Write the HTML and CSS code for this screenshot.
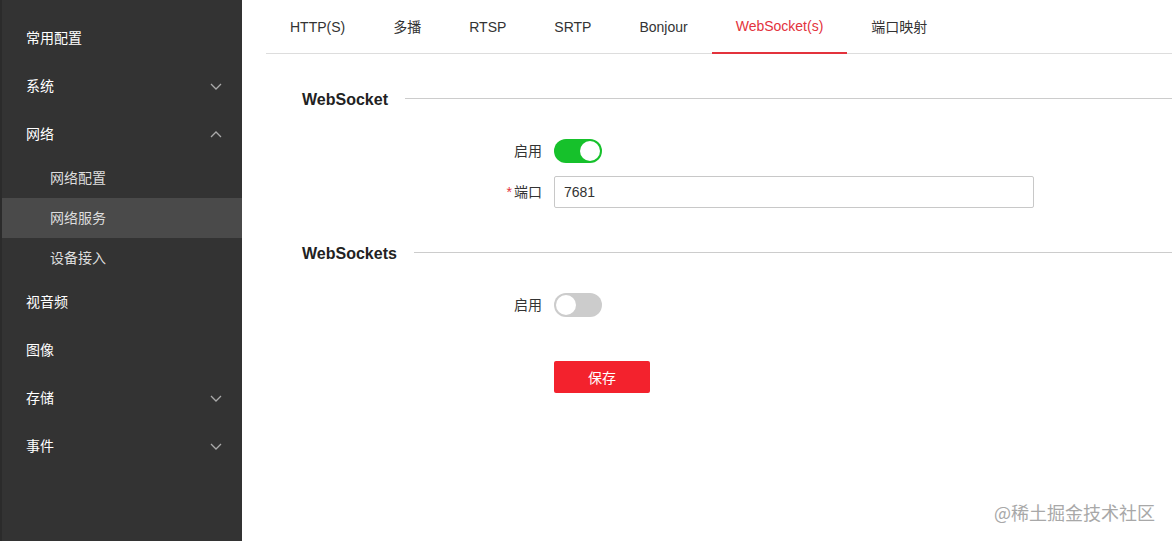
FILE: index.html
```html
<!DOCTYPE html>
<html lang="zh-CN">
<head>
    <meta charset="UTF-8">
    <meta name="viewport" content="width=device-width, initial-scale=1.0">
    <title>网络服务</title>
    <link rel="stylesheet" href="styles.css">
</head>
<body>
    <div class="layout">
        <aside class="sidebar">
            <div class="menu-item">常用配置</div>
            <div class="menu-item">系统
                <svg class="chevron" width="12" height="7" viewBox="0 0 12 7"><polyline points="1,1 6,6 11,1" /></svg>
            </div>
            <div class="menu-item">网络
                <svg class="chevron" width="12" height="7" viewBox="0 0 12 7"><polyline points="1,6 6,1 11,6" /></svg>
            </div>
            <div class="sub-item">网络配置</div>
            <div class="sub-item active">网络服务</div>
            <div class="sub-item">设备接入</div>
            <div class="menu-item">视音频</div>
            <div class="menu-item">图像</div>
            <div class="menu-item">存储
                <svg class="chevron" width="12" height="7" viewBox="0 0 12 7"><polyline points="1,1 6,6 11,1" /></svg>
            </div>
            <div class="menu-item">事件
                <svg class="chevron" width="12" height="7" viewBox="0 0 12 7"><polyline points="1,1 6,6 11,1" /></svg>
            </div>
        </aside>

        <main class="main">
            <nav class="tabs">
                <div class="tab">HTTP(S)</div>
                <div class="tab">多播</div>
                <div class="tab">RTSP</div>
                <div class="tab">SRTP</div>
                <div class="tab">Bonjour</div>
                <div class="tab active">WebSocket(s)</div>
                <div class="tab">端口映射</div>
            </nav>

            <div class="content">
                <div class="section-title"><span>WebSocket</span></div>
                <div class="form-row">
                    <label class="form-label">启用</label>
                    <span class="switch on"><span class="knob"></span></span>
                </div>
                <div class="form-row tight">
                    <label class="form-label"><span class="required">*</span>端口</label>
                    <input class="input" type="text" value="7681">
                </div>

                <div class="section-title second"><span>WebSockets</span></div>
                <div class="form-row">
                    <label class="form-label">启用</label>
                    <span class="switch"><span class="knob"></span></span>
                </div>

                <div class="form-row actions">
                    <span class="form-label"></span>
                    <button class="btn-save">保存</button>
                </div>
            </div>
        </main>
    </div>
    <div class="watermark">@稀土掘金技术社区</div>
</body>
</html>
```

FILE: styles.css
```css
html, body {
    margin: 0;
    height: 100%;
}
body {
    font-family: "Liberation Sans", "Noto Sans CJK SC", sans-serif;
    font-size: 14px;
    line-height: 20px;
    color: #333;
    background-color: #fff;
}
.layout {
    display: flex;
    height: 100%;
}
.sidebar {
    width: 240px;
    flex-shrink: 0;
    background-color: #333;
    border-left: 2px solid #2b2b2b;
    padding-top: 14px;
    box-sizing: content-box;
}
.menu-item {
    height: 48px;
    display: flex;
    align-items: center;
    justify-content: space-between;
    padding: 0 20px 0 24px;
    color: #fff;
}
.sub-item {
    height: 40px;
    display: flex;
    align-items: center;
    padding-left: 48px;
    color: #ddd;
}
.sub-item.active {
    background-color: #4a4a4a;
}
.chevron polyline {
    fill: none;
    stroke: #aaa;
    stroke-width: 1.3;
}
.main {
    flex: 1;
    padding-left: 24px;
}
.tabs {
    display: flex;
    height: 53px;
    border-bottom: 1px solid #ddd;
}
.tab {
    padding: 0 24px;
    display: flex;
    align-items: center;
    padding-bottom: 1px;
    box-sizing: border-box;
    height: 54px;
    margin-bottom: -1px;
    color: #333;
}
.tab.active {
    color: #e3323c;
    border-bottom: 2px solid #e3323c;
    padding-bottom: 0;
}
.content {
    padding-left: 36px;
}
.section-title {
    display: flex;
    align-items: center;
    height: 24px;
    margin-top: 33px;
    font-size: 16px;
    font-weight: bold;
    color: #222;
}
.section-title span {
    padding-top: 1px;
}
.section-title::after {
    content: "";
    flex: 1;
    height: 1px;
    background-color: #ccc;
    margin-left: 17px;
    margin-top: -2px;
}
.form-row {
    display: flex;
    align-items: center;
    height: 32px;
    margin-top: 24px;
}
.form-row.tight {
    margin-top: 9px;
}
.form-row.actions {
    margin-top: 40px;
}
.form-label {
    width: 240px;
    margin-right: 12px;
    text-align: right;
    color: #333;
}
.required {
    color: #e3323c;
    margin-right: 2px;
}
.switch {
    position: relative;
    width: 48px;
    height: 24px;
    border-radius: 12px;
    background-color: #ccc;
}
.switch.on {
    background-color: #16c12b;
}
.knob {
    position: absolute;
    top: 2px;
    left: 2px;
    width: 20px;
    height: 20px;
    border-radius: 50%;
    background-color: #fff;
}
.switch.on .knob {
    left: 26px;
}
.input {
    width: 480px;
    height: 32px;
    box-sizing: border-box;
    border: 1px solid #c8c8c8;
    border-radius: 2px;
    padding: 0 9px;
    font-family: "Liberation Sans", "Noto Sans CJK SC", sans-serif;
    font-size: 14px;
    color: #333;
    outline: none;
}
.btn-save {
    width: 96px;
    height: 32px;
    border: none;
    border-radius: 2px;
    background-color: #f3222d;
    color: #fff;
    font-family: "Liberation Sans", "Noto Sans CJK SC", sans-serif;
    font-size: 14px;
}
.watermark {
    position: absolute;
    right: 17px;
    bottom: 17px;
    font-family: "Noto Sans CJK SC", sans-serif;
    font-size: 18px;
    line-height: 24px;
    color: #a8a8a8;
}
```
